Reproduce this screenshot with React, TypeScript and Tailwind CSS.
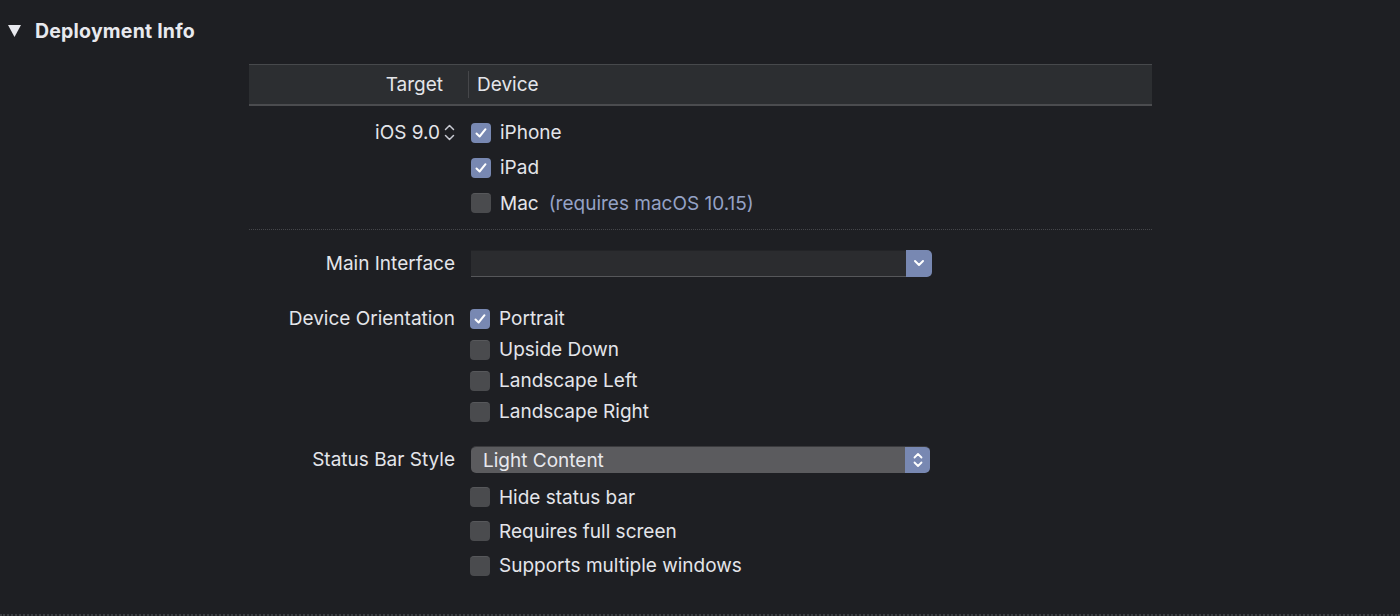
import React from "react";

const font = { fontFamily: "Inter, 'Liberation Sans', sans-serif" };

function Check({ checked }: { checked?: boolean }) {
  if (checked) {
    return (
      <div className="w-[20px] h-[20px] rounded-[4px] bg-[#7888b2] flex items-center justify-center shrink-0">
        <svg width="14" height="14" viewBox="0 0 14 14">
          <path d="M2.5 7.5 L5.6 10.5 L11.5 3.2" fill="none" stroke="#ffffff" strokeWidth="2" strokeLinecap="round" strokeLinejoin="round" />
        </svg>
      </div>
    );
  }
  return <div className="w-[20px] h-[20px] rounded-[4px] bg-[#4a4b4e] border-t border-[#57585b] shrink-0" />;
}

function T({ children, className = "" }: { children: React.ReactNode; className?: string }) {
  return <span className={`text-[19px] pt-[2px] ${className || "text-[#e4e5ea]"}`}>{children}</span>;
}

function CheckRow({ label, checked, h, extra, pl = "pl-[15px]" }: { label: string; checked?: boolean; h: string; extra?: React.ReactNode; pl?: string }) {
  return (
    <div className={`flex items-center ${h}`}>
      <div className="w-[206px] shrink-0" />
      <div className={`flex items-center gap-[9px] ${pl}`}>
        <Check checked={checked} />
        <T>{label}</T>
        {extra}
      </div>
    </div>
  );
}

export default function App() {
  return (
    <div className="w-[1400px] h-[616px] bg-[#1e1f23] overflow-hidden flex flex-col" style={font}>
      {/* Section title */}
      <div className="flex items-center h-[22px] mt-[20px] pl-[8px] gap-[14px]">
        <svg width="13" height="12" viewBox="0 0 13 12">
          <path d="M0 0 H13 L6.5 12 Z" fill="#e8e9ee" />
        </svg>
        <span className="text-[19.5px] font-bold text-[#e8e9ee] pt-[2px] tracking-[0.2px]">Deployment Info</span>
      </div>

      <div className="ml-[249px] w-[903px] mt-[22px] flex flex-col">
        {/* Header bar */}
        <div className="h-[42px] bg-[#2c2e31] border-t border-[#47494c] border-b-2 border-b-[#4b4c4f] flex items-center">
          <div className="w-[219px] h-full flex items-center justify-end pr-[25px]">
            <T>Target</T>
          </div>
          <div className="w-px h-[27px] bg-[#46474a]" />
          <div className="pl-[8px] flex items-center">
            <T>Device</T>
          </div>
        </div>

        {/* iOS rows */}
        <div className="mt-[9px] flex items-center h-[35px]">
          <div className="w-[206px] shrink-0 flex items-center justify-end gap-[4px]">
            <T>iOS 9.0</T>
            <svg width="11" height="19" viewBox="0 0 11 19">
              <path d="M1.5 6.5 L5.5 2.5 L9.5 6.5" fill="none" stroke="#c9cbd3" strokeWidth="1.5" strokeLinecap="round" strokeLinejoin="round" />
              <path d="M1.5 12.5 L5.5 16.5 L9.5 12.5" fill="none" stroke="#c9cbd3" strokeWidth="1.5" strokeLinecap="round" strokeLinejoin="round" />
            </svg>
          </div>
          <div className="flex items-center gap-[9px] pl-[16px]">
            <Check checked />
            <T>iPhone</T>
          </div>
        </div>
        <CheckRow label="iPad" checked h="h-[35px]" pl="pl-[16px]" />
        <CheckRow
          label="Mac"
          h="h-[36px]"
          pl="pl-[16px]"
          extra={<T className="text-[#95a2c6] ml-[1px]">(requires macOS 10.15)</T>}
        />

        <div className="mt-[8px] border-t border-dotted border-[#46474b]" />

        {/* Main Interface */}
        <div className="mt-[19px] flex items-center h-[28px]">
          <div className="w-[206px] shrink-0 flex justify-end">
            <T>Main Interface</T>
          </div>
          <div className="ml-[16px] w-[461px] h-[27px] flex">
            <div className="flex-1 bg-[#2b2c2f] border-t border-[#232427] border-b border-b-[#56575a]" />
            <div className="w-[26px] h-full bg-[#7888b2] rounded-r-[5px] flex items-center justify-center">
              <svg width="12" height="10" viewBox="0 0 12 10">
                <path d="M2 3 L6 7 L10 3" fill="none" stroke="#ffffff" strokeWidth="2" strokeLinecap="round" strokeLinejoin="round" />
              </svg>
            </div>
          </div>
        </div>

        {/* Device orientation */}
        <div className="mt-[26px] flex items-center h-[31px]">
          <div className="w-[206px] shrink-0 flex justify-end">
            <T>Device Orientation</T>
          </div>
          <div className="flex items-center gap-[9px] pl-[15px]">
            <Check checked />
            <T>Portrait</T>
          </div>
        </div>
        <CheckRow label="Upside Down" h="h-[31px]" />
        <CheckRow label="Landscape Left" h="h-[31px]" />
        <CheckRow label="Landscape Right" h="h-[31px]" />

        {/* Status bar */}
        <div className="mt-[19px] flex items-center h-[27px]">
          <div className="w-[206px] shrink-0 flex justify-end">
            <T>Status Bar Style</T>
          </div>
          <div className="ml-[16px] w-[459px] h-[27px] flex rounded-[5px] overflow-hidden border-t border-[#3a3a3d]">
            <div className="flex-1 bg-[#5b5b5e] flex items-center pl-[12px]">
              <T className="text-[#e8e9ee]">Light Content</T>
            </div>
            <div className="w-[25px] h-full bg-[#7888b2] flex items-center justify-center">
              <svg width="12" height="20" viewBox="0 0 12 20">
                <path d="M2.5 7.5 L6 4 L9.5 7.5" fill="none" stroke="#ffffff" strokeWidth="1.8" strokeLinecap="round" strokeLinejoin="round" />
                <path d="M2.5 12.5 L6 16 L9.5 12.5" fill="none" stroke="#ffffff" strokeWidth="1.8" strokeLinecap="round" strokeLinejoin="round" />
              </svg>
            </div>
          </div>
        </div>
        <div className="mt-[7px]" />
        <CheckRow label="Hide status bar" h="h-[34px]" />
        <CheckRow label="Requires full screen" h="h-[34px]" />
        <CheckRow label="Supports multiple windows" h="h-[35px]" />
      </div>

      <div className="mt-auto h-[2px] border-t-2 border-dotted border-[#3b3e42]" />
    </div>
  );
}
